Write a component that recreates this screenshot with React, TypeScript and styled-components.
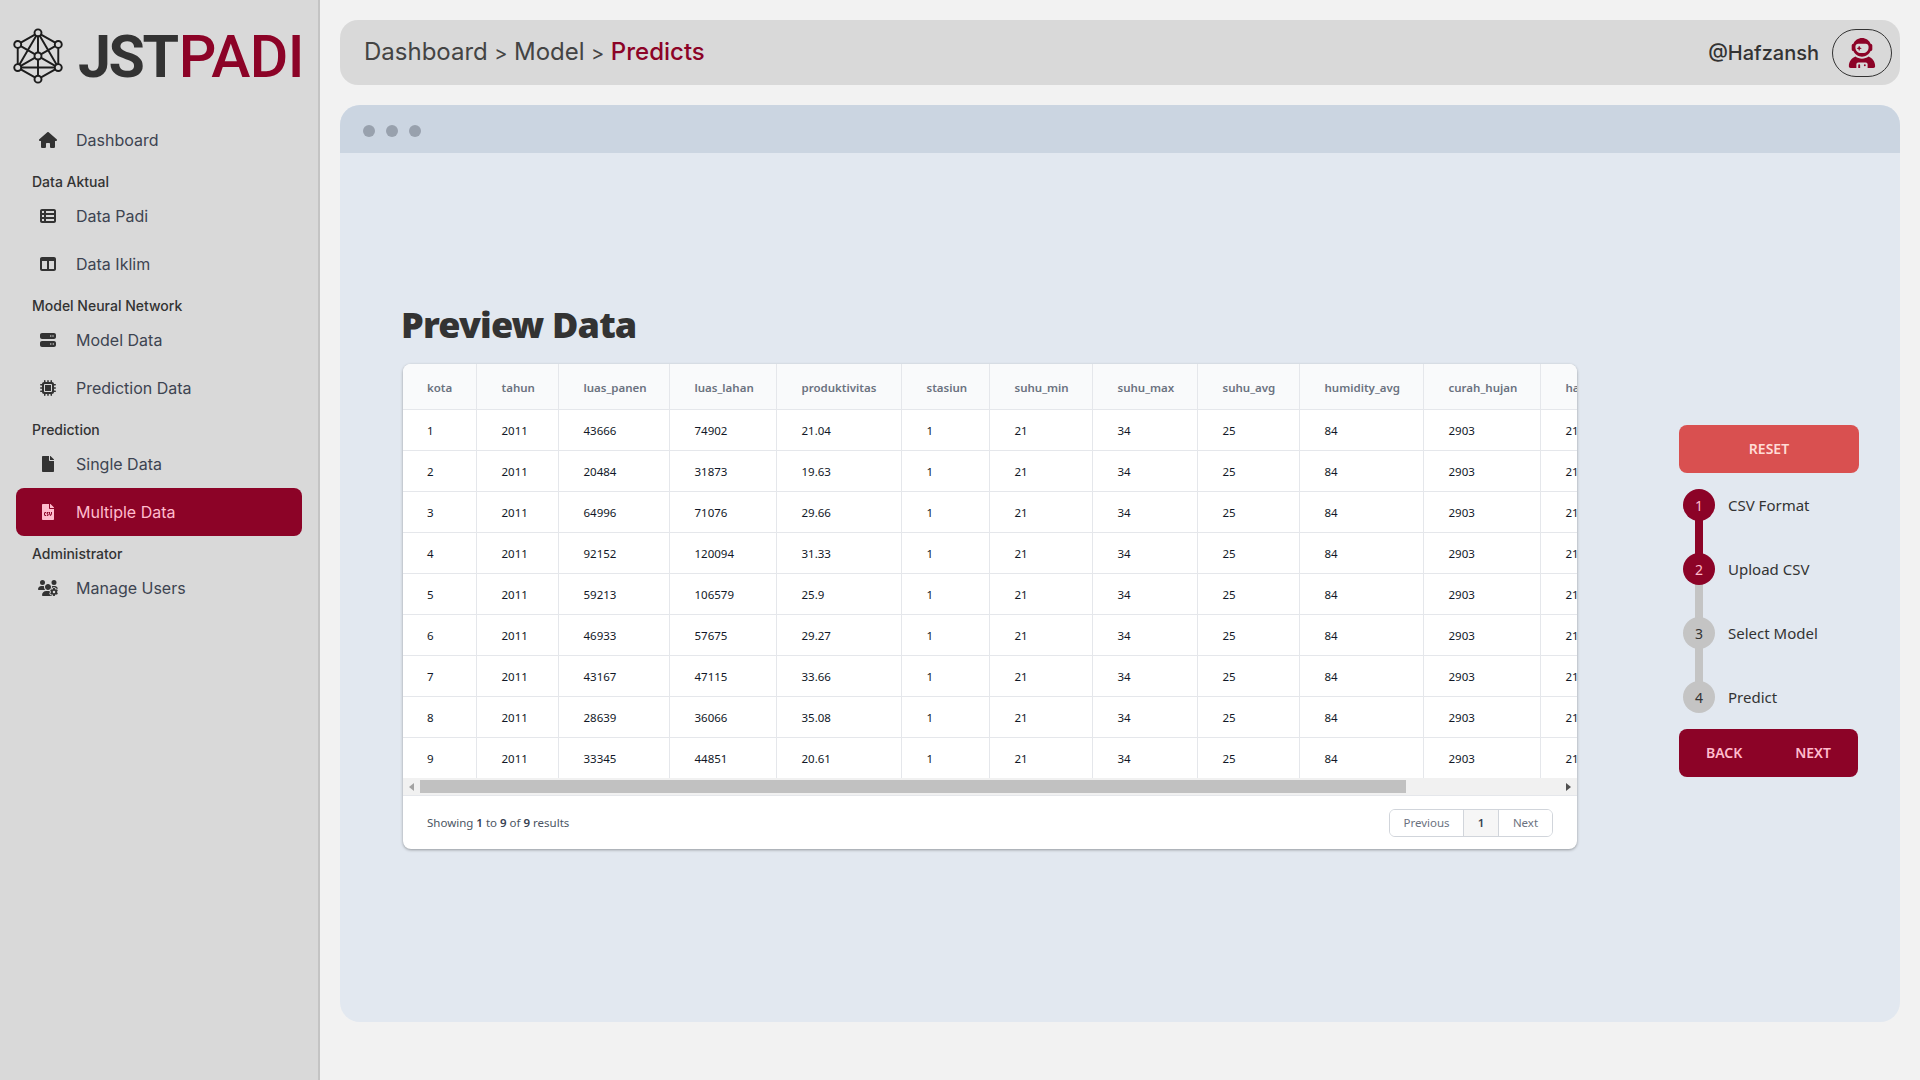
import React from "react";
import styled, { createGlobalStyle } from "styled-components";
import { FaFileCsv, FaFile } from "react-icons/fa";
import {
  FaHouse,
  FaTableList,
  FaTableColumns,
  FaServer,
  FaMicrochip,
  FaUsersGear,
  FaUserAstronaut,
} from "react-icons/fa6";

const CRIMSON = "#8c0327";
const SEGOE = `"Noto Sans", "Open Sans", sans-serif`;

const GlobalStyle = createGlobalStyle`
  html, body { margin: 0; padding: 0; height: 100%; overflow: hidden; }
  body { background: #f2f2f2; font-family: Inter, sans-serif; color: #333; }
  * { box-sizing: border-box; }
`;

const Page = styled.div`
  display: grid;
  grid-template-columns: 320px 1fr;
  height: 1080px;
`;

const Sidebar = styled.aside`
  background: #d9d9d9;
  border-right: 2px solid #c4c4c4;
  padding: 0 16px;
`;

const Brand = styled.div`
  display: flex;
  align-items: center;
  height: 116px;
  margin: 0 -8px 0 -6px;
  padding-bottom: 4px;
`;

const BrandText = styled.div`
  margin-left: 12px;
  font-family: Roboto, sans-serif;
  font-size: 59px;
  line-height: 1;
  font-weight: 700;
  letter-spacing: -2.4px;
  color: #333;
  white-space: nowrap;
  span {
    margin-left: 2px;
    color: ${CRIMSON};
    font-weight: 500;
    letter-spacing: -0.6px;
  }
`;

const NavItem = styled.div<{ $active?: boolean }>`
  display: flex;
  align-items: center;
  height: 48px;
  padding-left: 16px;
  border-radius: 8px;
  font-size: 16px;
  background: ${(p) => (p.$active ? CRIMSON : "transparent")};
  color: ${(p) => (p.$active ? "#ffbccd" : "#3d4451")};
`;

const NavIcon = styled.span<{ $active?: boolean; $w?: number }>`
  display: flex;
  justify-content: center;
  width: 32px;
  margin-right: 12px;
  color: ${(p) => (p.$active ? "#ffbccd" : "#333")};
  svg {
    display: block;
    width: ${(p) => p.$w ?? 16}px;
    height: 16px;
  }
`;

const NavLabel = styled.div`
  height: 28px;
  padding: 8px 0 0 16px;
  font-size: 14px;
  line-height: 20px;
  font-weight: 500;
  color: #333;
`;

const Main = styled.main`
  padding: 20px 20px 0 20px;
`;

const TopBar = styled.header`
  display: flex;
  align-items: center;
  justify-content: space-between;
  height: 65px;
  padding: 0 8px 0 24px;
  background: #d9d9d9;
  border-radius: 18px;
`;

const Crumbs = styled.nav`
  display: flex;
  align-items: center;
  margin-top: -2px;
  font-size: 24px;
  color: #444;
`;

const Crumb = styled.span<{ $current?: boolean }>`
  color: ${(p) => (p.$current ? CRIMSON : "#444")};
  font-weight: ${(p) => (p.$current ? 500 : 400)};
`;

const CrumbSep = styled.span`
  margin: 2px 6.5px 0;
  font-size: 20px;
`;

const UserBox = styled.div`
  display: flex;
  align-items: center;
  gap: 13px;
`;

const UserName = styled.span`
  font-size: 20px;
  font-weight: 500;
  color: #333;
`;

const Avatar = styled.div`
  display: flex;
  align-items: center;
  justify-content: center;
  width: 60px;
  height: 48px;
  border: 1px solid #333;
  border-radius: 24px;
  color: ${CRIMSON};
  font-size: 30px;
`;

const Window = styled.section`
  height: 917px;
  margin-top: 20px;
  background: #e2e8f0;
  border-radius: 20px;
  overflow: hidden;
`;

const WindowBar = styled.div`
  display: flex;
  align-items: center;
  gap: 11px;
  height: 48px;
  padding: 4px 0 0 23px;
  background: #cbd5e1;
`;

const Dot = styled.span`
  width: 12px;
  height: 12px;
  border-radius: 50%;
  background: #98a1ad;
`;

const WindowBody = styled.div`
  display: flex;
  align-items: flex-start;
  padding: 152px 0 0 63px;
`;

const Content = styled.div`
  width: 1174px;
  flex: none;
`;

const Title = styled.h1`
  margin: 0 0 19px -2px;
  font-family: ${SEGOE};
  font-size: 36px;
  line-height: 40px;
  font-weight: 900;
  letter-spacing: -0.85px;
  color: #333;
`;

const Card = styled.div`
  height: 485px;
  background: #fff;
  border-radius: 8px;
  box-shadow: 0 1px 3px rgba(0, 0, 0, 0.35);
  overflow: hidden;
  font-family: ${SEGOE};
`;

const TableClip = styled.div`
  height: 414px;
  overflow: hidden;
`;

const Table = styled.table`
  width: 1357px;
  table-layout: fixed;
  border-collapse: collapse;
  font-size: 11.5px;
`;

const Col = styled.col<{ $w: number }>`
  width: ${(p) => p.$w}px;
`;

const Th = styled.th`
  height: 45px;
  padding: 2px 24px 0;
  text-align: left;
  font-weight: 600;
  color: #6b7280;
  background: #f9fafb;
  border-right: 1px solid #e5e7eb;
  border-bottom: 1px solid #e5e7eb;
  white-space: nowrap;
  &:not(:first-child) { padding-left: 25px; }
`;

const Td = styled.td`
  height: 41px;
  padding: 2px 24px 0;
  color: #111827;
  border-right: 1px solid #e5e7eb;
  border-bottom: 1px solid #e5e7eb;
  white-space: nowrap;
  &:not(:first-child) { padding-left: 25px; }
`;

const ScrollTrack = styled.div`
  display: flex;
  align-items: center;
  height: 18px;
  background: #f1f1f1;
  border-bottom: 1px solid #e5e7eb;
`;

const ScrollThumb = styled.div`
  width: 986px;
  height: 13px;
  background: #c1c1c1;
`;

const ScrollArrow = styled.span<{ $right?: boolean }>`
  display: flex;
  justify-content: center;
  width: 17px;
  margin-left: ${(p) => (p.$right ? "auto" : 0)};
  svg { display: block; }
`;

const Footer = styled.div`
  display: flex;
  align-items: center;
  justify-content: space-between;
  height: 53px;
  padding: 0 24px;
  font-size: 11.5px;
  color: #4b5563;
  b { font-weight: 600; color: #374151; }
`;

const Pager = styled.div`
  display: flex;
  height: 28px;
  border: 1px solid #d1d5db;
  border-radius: 6px;
  overflow: hidden;
`;

const PageBtn = styled.span<{ $w: number; $current?: boolean }>`
  display: flex;
  align-items: center;
  justify-content: center;
  width: ${(p) => p.$w}px;
  border-left: ${(p) => (p.$current ? "1px solid #d1d5db" : "0")};
  border-right: ${(p) => (p.$current ? "1px solid #d1d5db" : "0")};
  background: ${(p) => (p.$current ? "#f6f6f6" : "#fff")};
  color: ${(p) => (p.$current ? "#374151" : "#6b7280")};
  font-weight: ${(p) => (p.$current ? 600 : 400)};
`;

const StepPanel = styled.div`
  width: 180px;
  margin: 120px 0 0 102px;
  flex: none;
  font-family: ${SEGOE};
`;

const Button = styled.div<{ $bg: string; $fg: string }>`
  display: flex;
  align-items: center;
  justify-content: center;
  height: 48px;
  padding-bottom: 2px;
  border-radius: 8px;
  background: ${(p) => p.$bg};
  color: ${(p) => p.$fg};
  font-size: 14px;
  font-weight: 600;
`;

const NavButtons = styled.div`
  display: flex;
  align-items: center;
  justify-content: space-between;
  width: 179px;
  height: 48px;
  padding: 0 27px 2px;
  border-radius: 8px;
  background: ${CRIMSON};
  color: #ffbccd;
  font-size: 14px;
  font-weight: 600;
`;

const Step = styled.div<{ $done: boolean; $first: boolean }>`
  position: relative;
  display: flex;
  align-items: center;
  gap: 13px;
  height: 64px;
  padding-left: 4px;
  font-size: 15px;
  color: #333;
  &::before {
    content: "";
    display: ${(p) => (p.$first ? "none" : "block")};
    position: absolute;
    left: 16px;
    top: -24px;
    width: 8px;
    height: 48px;
    background: ${(p) => (p.$done ? CRIMSON : "#c4c4c4")};
  }
`;

const StepDot = styled.span<{ $done: boolean }>`
  position: relative;
  z-index: 1;
  display: flex;
  align-items: center;
  justify-content: center;
  width: 32px;
  height: 32px;
  border-radius: 50%;
  background: ${(p) => (p.$done ? CRIMSON : "#c4c4c4")};
  color: ${(p) => (p.$done ? "#ffbccd" : "#333")};
  font-size: 14px;
`;

const columns = [
  ["kota", 73],
  ["tahun", 82],
  ["luas_panen", 111],
  ["luas_lahan", 107],
  ["produktivitas", 125],
  ["stasiun", 88],
  ["suhu_min", 103],
  ["suhu_max", 105],
  ["suhu_avg", 102],
  ["humidity_avg", 124],
  ["curah_hujan", 117],
  ["hari_hujan", 220],
] as const;

const rows = [
  [1, 43666, 74902, "21.04"],
  [2, 20484, 31873, "19.63"],
  [3, 64996, 71076, "29.66"],
  [4, 92152, 120094, "31.33"],
  [5, 59213, 106579, "25.9"],
  [6, 46933, 57675, "29.27"],
  [7, 43167, 47115, "33.66"],
  [8, 28639, 36066, "35.08"],
  [9, 33345, 44851, "20.61"],
];

const steps = ["CSV Format", "Upload CSV", "Select Model", "Predict"];

function Logo() {
  const nodes = [
    [39, 22],
    [18, 34],
    [60, 34],
    [39, 46],
    [18, 58],
    [60, 58],
    [39, 70],
  ];
  return (
    <svg width="56" height="60" viewBox="10 15 58 62" fill="none" stroke="#1c1c1c" strokeWidth="2">
      <path d="M39 22 60 34V58L39 70 18 58V34ZM39 22V70M18 58H60M39 22 18 58M39 22 60 58M18 34 60 58M60 34 18 58" />
      {nodes.map(([x, y]) => (
        <circle key={`${x}-${y}`} cx={x} cy={y} r="3.6" fill="#d9d9d9" />
      ))}
    </svg>
  );
}

export default function App() {
  return (
    <>
      <GlobalStyle />
      <Page>
        <Sidebar>
          <Brand>
            <Logo />
            <BrandText>
              JST<span>PADI</span>
            </BrandText>
          </Brand>
          <NavItem>
            <NavIcon $w={18}><FaHouse /></NavIcon>Dashboard
          </NavItem>
          <NavLabel>Data Aktual</NavLabel>
          <NavItem>
            <NavIcon><FaTableList /></NavIcon>Data Padi
          </NavItem>
          <NavItem>
            <NavIcon><FaTableColumns /></NavIcon>Data Iklim
          </NavItem>
          <NavLabel>Model Neural Network</NavLabel>
          <NavItem>
            <NavIcon><FaServer /></NavIcon>Model Data
          </NavItem>
          <NavItem>
            <NavIcon><FaMicrochip /></NavIcon>Prediction Data
          </NavItem>
          <NavLabel>Prediction</NavLabel>
          <NavItem>
            <NavIcon><FaFile /></NavIcon>Single Data
          </NavItem>
          <NavItem $active>
            <NavIcon $active><FaFileCsv /></NavIcon>Multiple Data
          </NavItem>
          <NavLabel>Administrator</NavLabel>
          <NavItem>
            <NavIcon $w={20}><FaUsersGear /></NavIcon>Manage Users
          </NavItem>
        </Sidebar>
        <Main>
          <TopBar>
            <Crumbs>
              <Crumb>Dashboard</Crumb>
              <CrumbSep>&gt;</CrumbSep>
              <Crumb>Model</Crumb>
              <CrumbSep>&gt;</CrumbSep>
              <Crumb $current>Predicts</Crumb>
            </Crumbs>
            <UserBox>
              <UserName>@Hafzansh</UserName>
              <Avatar><FaUserAstronaut /></Avatar>
            </UserBox>
          </TopBar>
          <Window>
            <WindowBar>
              <Dot />
              <Dot />
              <Dot />
            </WindowBar>
            <WindowBody>
              <Content>
                <Title>Preview Data</Title>
                <Card>
                  <TableClip>
                    <Table>
                      <colgroup>
                        {columns.map(([name, w]) => (
                          <Col key={name} $w={w} />
                        ))}
                      </colgroup>
                      <thead>
                        <tr>
                          {columns.map(([name]) => (
                            <Th key={name}>{name}</Th>
                          ))}
                        </tr>
                      </thead>
                      <tbody>
                        {rows.map(([id, panen, lahan, prod]) => (
                          <tr key={id}>
                            <Td>{id}</Td>
                            <Td>2011</Td>
                            <Td>{panen}</Td>
                            <Td>{lahan}</Td>
                            <Td>{prod}</Td>
                            <Td>1</Td>
                            <Td>21</Td>
                            <Td>34</Td>
                            <Td>25</Td>
                            <Td>84</Td>
                            <Td>2903</Td>
                            <Td>21</Td>
                          </tr>
                        ))}
                      </tbody>
                    </Table>
                  </TableClip>
                  <ScrollTrack>
                    <ScrollArrow>
                      <svg width="5" height="8" viewBox="0 0 5 8"><path d="M5 0V8L0 4Z" fill="#a3a3a3" /></svg>
                    </ScrollArrow>
                    <ScrollThumb />
                    <ScrollArrow $right>
                      <svg width="5" height="8" viewBox="0 0 5 8"><path d="M0 0V8L5 4Z" fill="#505050" /></svg>
                    </ScrollArrow>
                  </ScrollTrack>
                  <Footer>
                    <span>
                      Showing <b>1</b> to <b>9</b> of <b>9</b> results
                    </span>
                    <Pager>
                      <PageBtn $w={73}>Previous</PageBtn>
                      <PageBtn $w={36} $current>1</PageBtn>
                      <PageBtn $w={53}>Next</PageBtn>
                    </Pager>
                  </Footer>
                </Card>
              </Content>
              <StepPanel>
                <Button $bg="#d95050" $fg="#ffdcd6">RESET</Button>
                {steps.map((label, i) => (
                  <Step key={label} $done={i < 2} $first={i === 0}>
                    <StepDot $done={i < 2}>{i + 1}</StepDot>
                    {label}
                  </Step>
                ))}
                <NavButtons>
                  <span>BACK</span>
                  <span>NEXT</span>
                </NavButtons>
              </StepPanel>
            </WindowBody>
          </Window>
        </Main>
      </Page>
    </>
  );
}
